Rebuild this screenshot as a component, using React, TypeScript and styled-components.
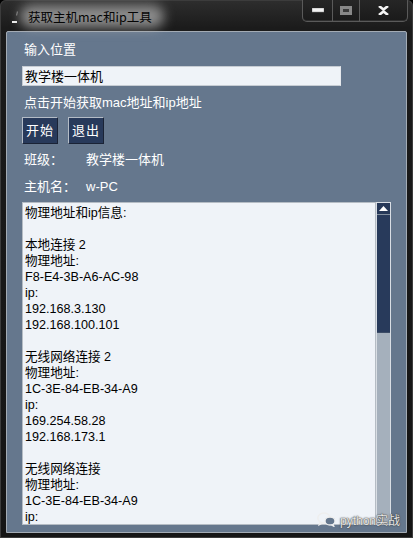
import React from "react";
import styled, { createGlobalStyle } from "styled-components";

const Global = createGlobalStyle`
  html, body { margin: 0; padding: 0; background: #000; }
  #root { width: 413px; height: 538px; }
`;

const Window = styled.div`
  position: relative;
  width: 413px;
  height: 538px;
  box-sizing: border-box;
  display: flex;
  flex-direction: column;
  background: linear-gradient(180deg, #2e2e2e 0px, #1b1b1b 28px, #151515 100%);
  border-radius: 6px 6px 0 0;
  box-shadow: inset 0 0 0 1px #3c3c3c;
  overflow: hidden;
  font-family: "Liberation Sans", "Noto Sans CJK SC", sans-serif;
`;

const TitleBar = styled.div`
  height: 31px;
  flex: none;
  display: flex;
  align-items: flex-start;
  position: relative;
`;

const TitleIcon = styled.div`
  width: 10px;
  height: 14px;
  margin: 10px 5px 0 11px;
`;

const TitleText = styled.div`
  position: relative;
  margin-top: 8px;
  padding: 0 4px 0 2px;
  font-size: 12.5px;
  line-height: 17px;
  color: #050505;
  font-family: "Noto Sans CJK SC", "Liberation Sans", sans-serif;
  &::before {
    content: "";
    position: absolute;
    left: -6px;
    right: -8px;
    top: -3px;
    bottom: -3px;
    background: rgba(175, 175, 175, 0.75);
    border-radius: 12px;
    filter: blur(6px);
    z-index: 0;
  }
  span {
    position: relative;
    z-index: 1;
  }
`;

const Controls = styled.div`
  margin-left: auto;
  margin-right: 5px;
  display: flex;
  height: 21px;
  border: 1px solid #5a5a5a;
  border-top: none;
  border-radius: 0 0 5px 5px;
  background: linear-gradient(180deg, #262626, #1a1a1a);
  box-shadow: inset 0 -1px 0 #2f2f2f;
`;

const CtrlBtn = styled.div<{ $w: number; $last?: boolean }>`
  width: ${(p) => p.$w}px;
  display: flex;
  align-items: center;
  justify-content: center;
  border-right: ${(p) => (p.$last ? "none" : "1px solid #5a5a5a")};
`;

const Panel = styled.div`
  flex: 1;
  margin: 0 6px 5px 6px;
  box-sizing: border-box;
  background: #65778d;
  border: 1px solid #a3abb4;
  border-radius: 2px 2px 0 0;
  padding: 10px 0 0 15px;
  display: flex;
  flex-direction: column;
  align-items: flex-start;
`;

const Label = styled.div<{ $mt: number }>`
  margin-top: ${(p) => p.$mt}px;
  padding-left: 2px;
  height: 16px;
  font-size: 13px;
  line-height: 16px;
  color: #ffffff;
  white-space: nowrap;
`;

const Input = styled.div`
  margin-top: 8px;
  width: 319px;
  height: 20px;
  box-sizing: border-box;
  background: #eff3f8;
  border: 1px solid #c6ccd3;
  border-right-color: #e6e9ed;
  padding: 0 2px;
  font-size: 13px;
  line-height: 18px;
  color: #000;
  font-family: "Noto Sans CJK SC", sans-serif;
`;

const ButtonRow = styled.div`
  margin-top: 6px;
  display: flex;
  gap: 10px;
`;

const Button = styled.div`
  width: 36px;
  height: 27px;
  box-sizing: border-box;
  background: #283a5b;
  border: 1px solid #b4bcc6;
  border-right-color: #1a2336;
  border-bottom-color: #1a2336;
  color: #fff;
  font-size: 13px;
  line-height: 25px;
  text-align: center;
  letter-spacing: 1px;
`;

const InfoRow = styled.div<{ $mt: number }>`
  margin-top: ${(p) => p.$mt}px;
  padding-left: 2px;
  display: grid;
  grid-template-columns: 62px auto;
  font-size: 13px;
  line-height: 16px;
  color: #fff;
`;

const Output = styled.div`
  margin-top: 7px;
  width: 369px;
  height: 323px;
  display: flex;
`;

const TextBox = styled.div`
  flex: 1;
  box-sizing: border-box;
  background: #eff3f8;
  border: 1px solid #b5bcc4;
  padding: 2px 2px;
  overflow: hidden;
  font-size: 12.6px;
  line-height: 16px;
  color: #000;
`;

const Line = styled.div`
  height: 16px;
  white-space: pre;
`;

const Scrollbar = styled.div`
  width: 15px;
  box-sizing: border-box;
  background: #a5b0bc;
  border: 1px solid #d9dee4;
  display: flex;
  flex-direction: column;
`;

const ArrowBtn = styled.div`
  height: 11px;
  background: #263858;
  border-bottom: 1px solid #8390a0;
  display: flex;
  align-items: center;
  justify-content: center;
`;

const Thumb = styled.div`
  height: 117px;
  background: #283a5b;
  border-bottom: 1px solid #3c4c66;
`;

const Watermark = styled.div`
  position: absolute;
  right: 13px;
  bottom: 10px;
  display: flex;
  align-items: center;
  gap: 4px;
  font-size: 12px;
  color: #e8e8e8;
  text-shadow: 0 0 2px #444, 0 0 1px #222;
  font-family: "Liberation Sans", "Noto Sans CJK SC", sans-serif;
`;

const lines = [
  "物理地址和ip信息:",
  "",
  "本地连接 2",
  "物理地址:",
  "F8-E4-3B-A6-AC-98",
  "ip:",
  "192.168.3.130",
  "192.168.100.101",
  "",
  "无线网络连接 2",
  "物理地址:",
  "1C-3E-84-EB-34-A9",
  "ip:",
  "169.254.58.28",
  "192.168.173.1",
  "",
  "无线网络连接",
  "物理地址:",
  "1C-3E-84-EB-34-A9",
  "ip:",
  "",
];

export default function App() {
  return (
    <>
      <Global />
      <Window>
        <TitleBar>
          <TitleIcon>
            <svg width="10" height="14" viewBox="0 0 10 14">
              <path d="M6 1 L7 2 L6 6 L5 5 Z" fill="#777" />
              <rect x="1" y="11" width="5" height="2" fill="#eee" />
            </svg>
          </TitleIcon>
          <TitleText>
            <span>获取主机mac和ip工具</span>
          </TitleText>
          <Controls>
            <CtrlBtn $w={29}>
              <svg width="12" height="5" viewBox="0 0 12 5">
                <rect x="0" y="0" width="12" height="4" fill="#f2f2f2" stroke="#888" strokeWidth="0.5" />
              </svg>
            </CtrlBtn>
            <CtrlBtn $w={26}>
              <svg width="12" height="9" viewBox="0 0 12 9">
                <rect x="0" y="0" width="12" height="9" fill="#888" />
                <rect x="3" y="3" width="6" height="3" fill="#3a3a3a" />
              </svg>
            </CtrlBtn>
            <CtrlBtn $w={47} $last>
              <svg width="11" height="9" viewBox="0 0 11 9">
                <path d="M1 0 L5.5 3.5 L10 0 M1 9 L5.5 5.5 L10 9" stroke="#f4f4f4" strokeWidth="2.6" fill="none" />
              </svg>
            </CtrlBtn>
          </Controls>
        </TitleBar>
        <Panel>
          <Label $mt={0}>输入位置</Label>
          <Input>教学楼一体机</Input>
          <Label $mt={9}>点击开始获取mac地址和ip地址</Label>
          <ButtonRow>
            <Button>开始</Button>
            <Button>退出</Button>
          </ButtonRow>
          <InfoRow $mt={8}>
            <span>班级：</span>
            <span>教学楼一体机</span>
          </InfoRow>
          <InfoRow $mt={11}>
            <span>主机名：</span>
            <span>w-PC</span>
          </InfoRow>
          <Output>
            <TextBox>
              {lines.map((l, i) => (
                <Line key={i}>{l}</Line>
              ))}
            </TextBox>
            <Scrollbar>
              <ArrowBtn>
                <svg width="9" height="5" viewBox="0 0 9 5">
                  <path d="M0 5 L4.5 0 L9 5 Z" fill="#fff" />
                </svg>
              </ArrowBtn>
              <Thumb />
            </Scrollbar>
          </Output>
        </Panel>
        <Watermark>
          <svg width="19" height="15" viewBox="0 0 19 15">
            <ellipse cx="7" cy="6" rx="6.2" ry="5" fill="none" stroke="#eee" strokeWidth="1.3" />
            <path d="M3 10 L2 13 L5.5 11" fill="none" stroke="#eee" strokeWidth="1.2" />
            <ellipse cx="13" cy="9" rx="5" ry="4" fill="#65778d" stroke="#eee" strokeWidth="1.3" />
            <path d="M16 12 L17 14.5 L14 12.8" fill="none" stroke="#eee" strokeWidth="1.1" />
          </svg>
          <span>python实战</span>
        </Watermark>
      </Window>
    </>
  );
}
